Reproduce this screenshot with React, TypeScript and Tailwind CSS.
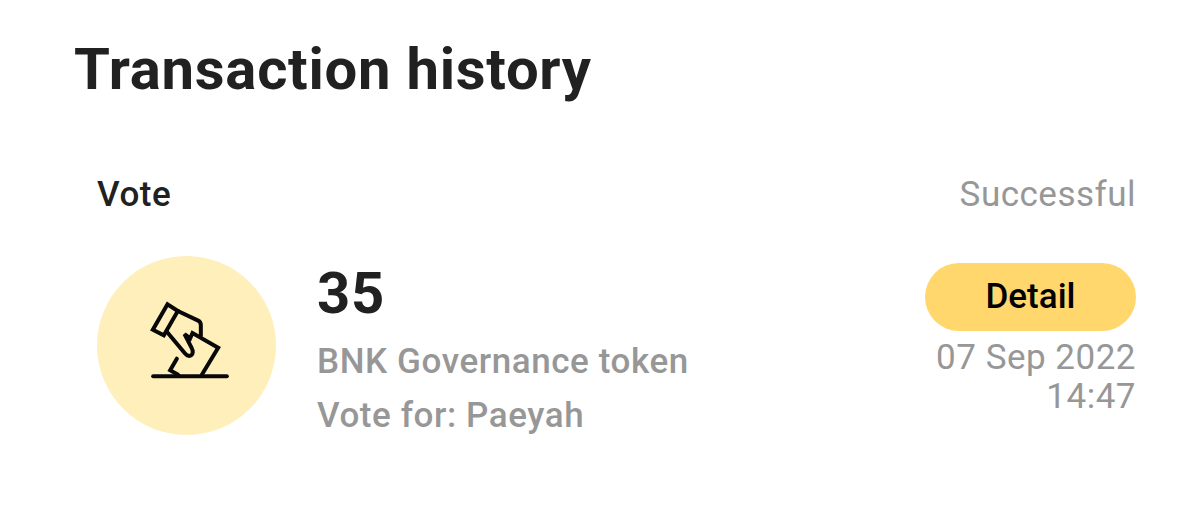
export default function App() {
  return (
    <main className="h-[515px] w-[1200px] overflow-hidden bg-white pt-[35px] pr-[64px] pl-[74px] font-['Roboto',sans-serif] text-[#212121]">
      <h1 className="text-[58px] leading-[68px] font-bold tracking-[0.74px] whitespace-nowrap">Transaction history</h1>
      <section className="pt-[71px] pl-[23px]">
        <div className="flex justify-between text-[35px] leading-[42px]">
          <span className="font-medium tracking-[0.6px]">Vote</span>
          <span className="tracking-[0.5px] text-[#979797]">Successful</span>
        </div>
        <div className="flex pt-[39px]">
          <div className="mt-[0.5px] flex h-[179px] w-[179px] shrink-0 items-center justify-center rounded-full bg-[#ffefbb]">
            <svg width="100" height="100" viewBox="-10.5 15 300 300" fill="none" stroke="#080808" strokeWidth="12" strokeLinecap="round" strokeLinejoin="miter">
              <path d="M38 259H259" />
              <path d="M81 43L37 119L70 136L112 63Z" />
              <path d="M112 63L173 92Q181 96 181 106V137" />
              <path d="M79 125L133 190Q144 203 154 194Q160 187 153 173L132 132L149 145L156 129L233 173L184 254" />
              <path d="M109 206L89 241L113 254" />
            </svg>
          </div>
          <div className="ml-[41px] flex flex-1 flex-col whitespace-nowrap">
            <strong className="mt-[4px] text-[58px] leading-[68px] font-bold tracking-[0.7px]">35</strong>
            <span className="mt-[8px] text-[35px] leading-[54px] font-medium tracking-[0.58px] text-[#979797]">BNK Governance token</span>
            <span className="text-[35px] leading-[54px] font-medium tracking-[0.58px] text-[#979797]">Vote for: Paeyah</span>
          </div>
          <div className="flex w-[211px] flex-col pt-[8px] text-right text-[35px] leading-[39px] text-[#979797]">
            <button className="mb-[7px] h-[68px] w-full rounded-full bg-[#ffd76d] pb-[1px] font-medium text-black">Detail</button>
            <span className="tracking-[0.5px]">07 Sep 2022</span>
            <span className="tracking-[0.5px]">14:47</span>
          </div>
        </div>
      </section>
    </main>
  );
}
